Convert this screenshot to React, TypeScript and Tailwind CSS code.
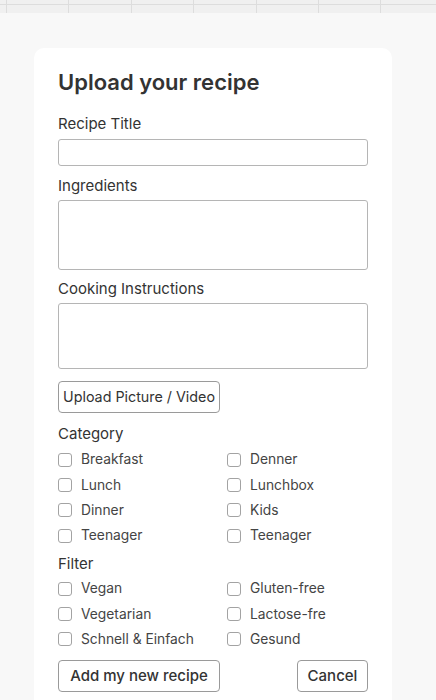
const category = [
  ['Breakfast', 'Denner'],
  ['Lunch', 'Lunchbox'],
  ['Dinner', 'Kids'],
  ['Teenager', 'Teenager'],
]

const filters = [
  ['Vegan', 'Gluten-free'],
  ['Vegetarian', 'Lactose-fre'],
  ['Schnell & Einfach', 'Gesund'],
]

const gridLines = [6, 68, 131, 193, 256, 318, 380]

const Check = ({ label }: { label: string }) => (
  <label className="flex h-[25.3px] items-center gap-[9px] text-[13.8px] text-[#444]">
    <span className="h-[14px] w-[14px] shrink-0 rounded-[3px] border border-[#a3a3a3] bg-white" />
    {label}
  </label>
)

const CheckGroup = ({ rows }: { rows: string[][] }) => (
  <div className="grid grid-cols-[169px_1fr]">
    {rows.map((r, i) => (
      <div key={i} className="contents">
        <Check label={r[0]} />
        <Check label={r[1]} />
      </div>
    ))}
  </div>
)

const App = () => {
  return (
    <div className="min-h-[700px] bg-[#f8f8f8] font-['Inter',sans-serif]">
      <div className="relative h-[13px] bg-[#f0f0f0]">
        <div className="absolute left-0 right-0 top-[4px] h-px bg-[#dddddd]" />
        {gridLines.map((x) => (
          <div key={x} className="absolute top-0 h-[13px] w-px bg-[#dddddd]" style={{ left: x }} />
        ))}
      </div>
      <div className="ml-[34px] mt-[35px] h-[652px] w-[358px] rounded-t-[10px] bg-white px-6 pt-5">
        <h1 className="text-[22px] font-semibold leading-[28px] text-[#333]">Upload your recipe</h1>
        <div className="mt-[18px] text-[15px] leading-[20px] text-[#333]">Recipe Title</div>
        <input className="mt-[5px] block h-[27px] w-[310px] rounded-[3px] border border-[#b5b5b5]" />
        <div className="mt-[10px] text-[15px] leading-[20px] text-[#333]">Ingredients</div>
        <textarea className="mt-[4px] block h-[70px] w-[310px] resize-none rounded-[3px] border border-[#b5b5b5]" />
        <div className="mt-[9px] text-[15px] leading-[20px] text-[#333]">Cooking Instructions</div>
        <textarea className="mt-[4px] block h-[66px] w-[310px] resize-none rounded-[3px] border border-[#b5b5b5]" />
        <button className="mt-[12px] flex h-[32px] w-[162px] items-center justify-center rounded-[4px] border border-[#9a9a9a] bg-white text-[14.3px] text-[#333]">
          Upload Picture / Video
        </button>
        <div className="mt-[11px] text-[15px] leading-[20px] text-[#333]">Category</div>
        <div className="mt-[3px]">
          <CheckGroup rows={category} />
        </div>
        <div className="mt-[6px] text-[15px] leading-[20px] text-[#333]">Filter</div>
        <div className="mt-[2px]">
          <CheckGroup rows={filters} />
        </div>
        <div className="mt-[8px] flex w-[310px] justify-between">
          <button className="flex h-[32px] w-[162px] items-center justify-center rounded-[4px] border border-[#9a9a9a] bg-white text-[15px] font-medium text-[#333]">
            Add my new recipe
          </button>
          <button className="flex h-[32px] w-[71px] items-center justify-center rounded-[4px] border border-[#9a9a9a] bg-white text-[15px] font-medium text-[#333]">
            Cancel
          </button>
        </div>
      </div>
    </div>
  )
}

export default App
